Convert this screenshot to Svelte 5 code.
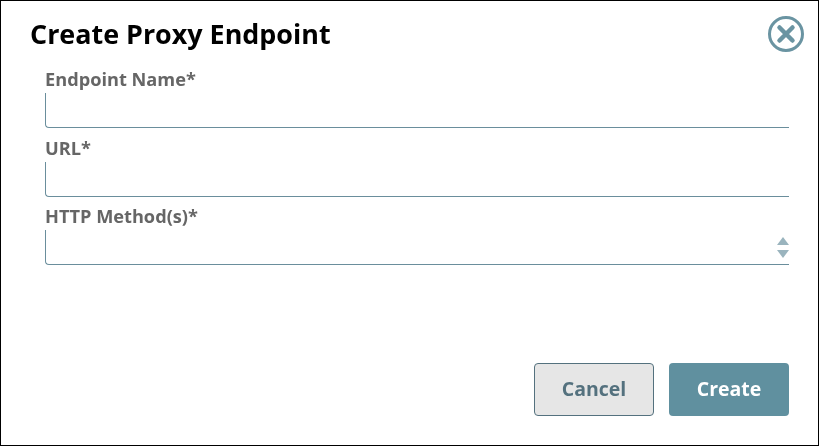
<script>
    const fields = [
        { label: "Endpoint Name*", select: false },
        { label: "URL*", select: false },
        { label: "HTTP Method(s)*", select: true },
    ];
</script>

<section class="dialog">
    <header class="head">
        <h1>Create Proxy Endpoint</h1>
        <button class="close" aria-label="Close">
            <svg width="38" height="38" viewBox="0 0 38 38">
                <circle cx="19" cy="19" r="16.5" fill="none" stroke="#6a94a2" stroke-width="3" />
                <path d="M12.5 12.5 L25.5 25.5 M25.5 12.5 L12.5 25.5" stroke="#6a94a2" stroke-width="4.5" stroke-linecap="round" />
            </svg>
        </button>
    </header>

    <div class="form">
        {#each fields as field}
            <div class="field">
                <span class="label">{field.label}</span>
                <div class="input">
                    {#if field.select}
                        <span class="arrows">
                            <i class="up"></i>
                            <i class="down"></i>
                        </span>
                    {/if}
                </div>
            </div>
        {/each}
    </div>

    <footer class="actions">
        <button class="btn cancel">Cancel</button>
        <button class="btn create">Create</button>
    </footer>
</section>

<style>
    :global(body) {
        background: #fff;
    }
    .dialog {
        box-sizing: border-box;
        width: 819px;
        height: 446px;
        border: 1px solid #000;
        font-family: "Open Sans", sans-serif;
        display: flex;
        flex-direction: column;
        will-change: transform;
    }
    .head {
        display: flex;
        justify-content: space-between;
        align-items: flex-start;
        padding: 13px 13px 0 29px;
        height: 55px;
        box-sizing: border-box;
    }
    h1 {
        margin: 0;
        font-size: 26.9px;
        line-height: 40px;
        font-weight: 700;
        color: #000;
    }
    .close {
        border: none;
        background: none;
        padding: 0;
        margin-top: 1px;
        width: 38px;
        height: 38px;
    }
    .form {
        padding: 0 29px 0 44px;
        display: flex;
        flex-direction: column;
        gap: 7.5px;
        margin-top: 11px;
    }
    .field {
        display: flex;
        flex-direction: column;
    }
    .label {
        font-size: 18.2px;
        font-weight: 700;
        line-height: 24px;
        margin-bottom: 2px;
        color: #666;
    }
    .input {
        position: relative;
        height: 34px;
        border-left: 1px solid #6a8e9c;
        border-bottom: 1px solid #6a8e9c;
        border-bottom-left-radius: 4px;
    }
    .arrows {
        position: absolute;
        right: 0;
        bottom: 6px;
        display: flex;
        flex-direction: column;
        gap: 5px;
    }
    .arrows i {
        display: block;
        width: 0;
        height: 0;
        border-left: 6.5px solid transparent;
        border-right: 6.5px solid transparent;
    }
    .up {
        border-bottom: 8px solid #9ab4be;
    }
    .down {
        border-top: 8px solid #9ab4be;
    }
    .actions {
        margin-top: auto;
        display: flex;
        justify-content: flex-end;
        gap: 15px;
        padding: 0 29px 29px 0;
    }
    .btn {
        box-sizing: border-box;
        width: 120px;
        height: 53px;
        border-radius: 4px;
        font-family: inherit;
        font-size: 19.5px;
        font-weight: 700;
        padding-bottom: 3px;
    }
    .cancel {
        background: #e6e6e6;
        border: 1px solid #54717e;
        color: #54717e;
    }
    .create {
        background: #60909f;
        border: none;
        color: #fff;
    }
</style>
